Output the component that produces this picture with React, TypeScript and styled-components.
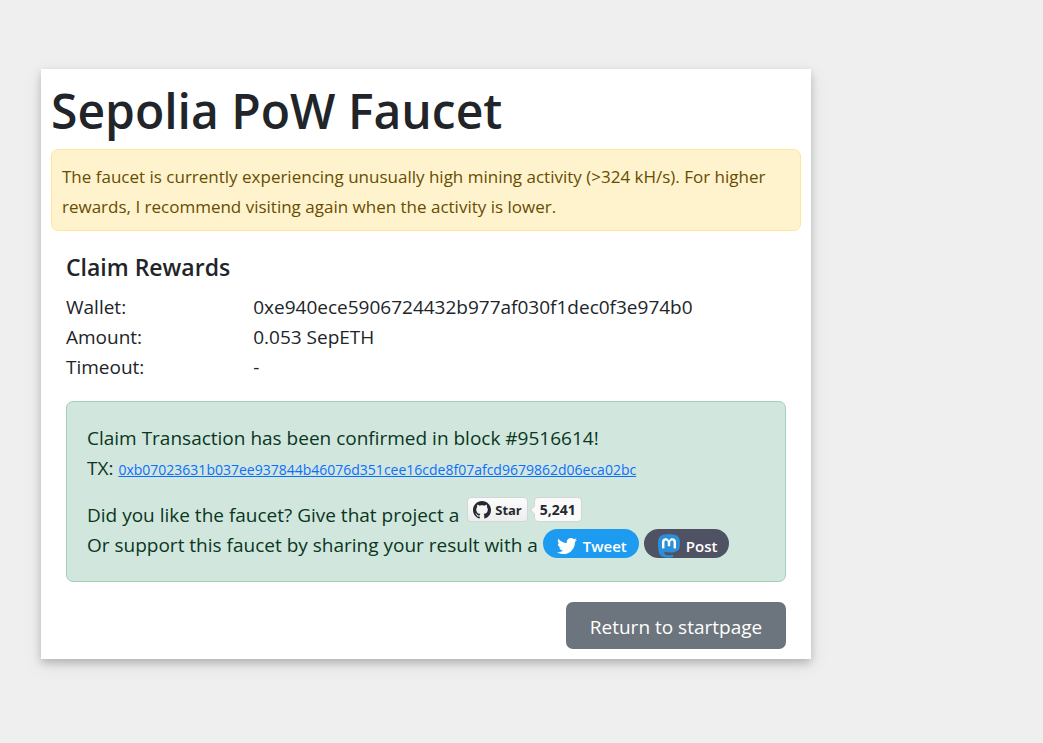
import React from "react";
import styled, { createGlobalStyle } from "styled-components";
import { FaTwitter } from "react-icons/fa";

const GlobalStyle = createGlobalStyle`
  *, *::before, *::after { box-sizing: border-box; }
  body {
    margin: 0;
    background: #efefef;
    color: #212529;
    font-family: "Segoe UI", "Open Sans", "Noto Sans", sans-serif;
    font-size: 19px;
    line-height: 30px;
  }
`;

const Page = styled.main`
  padding: 69px 41px;
`;

const Card = styled.section`
  max-width: 770px;
  padding: 12px 10px 10px;
  background: #fff;
  box-shadow: 0 4px 8px rgba(0, 0, 0, 0.2), 0 6px 20px rgba(0, 0, 0, 0.08);
`;

const Title = styled.h1`
  margin: 0 0 8px;
  font-size: 48px;
  font-weight: 600;
  line-height: 60px;
`;

const Alert = styled.div<{ $tone: "warning" | "success" }>`
  border: 1px solid ${(p) => (p.$tone === "warning" ? "#ffe69c" : "#a3cfbb")};
  border-radius: 7px;
  background: ${(p) => (p.$tone === "warning" ? "#fff3cd" : "#d1e7dd")};
  color: ${(p) => (p.$tone === "warning" ? "#664d03" : "#0a3622")};
  padding: ${(p) => (p.$tone === "warning" ? "12px 10px 8px" : "21px 20px")};
  font-size: ${(p) => (p.$tone === "warning" ? "17px" : "19px")};
`;

const Claim = styled.div`
  padding: 21px 15px 0;
`;

const Subtitle = styled.h2`
  margin: 0 0 10px;
  font-size: 23px;
  font-weight: 600;
  line-height: 30px;
`;

const Details = styled.dl`
  display: grid;
  grid-template-columns: 26% 1fr;
  margin: 0 0 19px;
`;

const Term = styled.dt``;

const Value = styled.dd`
  margin: 0;
`;

const Line = styled.div<{ $spaced?: boolean; $baseline?: boolean }>`
  display: flex;
  align-items: ${(p) => (p.$baseline ? "baseline" : "center")};
  height: 30px;
  white-space: pre;
  margin-top: ${(p) => (p.$spaced ? "17px" : "0")};
`;

const TxLink = styled.a`
  margin-left: 5px;
  color: #0d6efd;
  font-size: 14px;
`;

const StarGroup = styled.span`
  display: flex;
  align-self: flex-start;
  gap: 6px;
  margin: -3px 0 0 8px;
`;

const StarLink = styled.a<{ $count?: boolean }>`
  position: relative;
  display: flex;
  align-items: center;
  gap: 4px;
  height: 25px;
  padding: 0 5px;
  border: 1px solid #d0d7d4;
  border-radius: 4px;
  background: ${(p) => (p.$count ? "#fafafa" : "linear-gradient(#fcfcfc, #eeeeee)")};
  color: #24292f;
  font-size: ${(p) => (p.$count ? "14px" : "13px")};
  font-weight: 700;
  line-height: 20px;
  text-decoration: none;

  &::before {
    content: ${(p) => (p.$count ? '""' : "none")};
    position: absolute;
    top: 9px;
    left: -4px;
    width: 6px;
    height: 6px;
    border: 1px solid #d0d7d4;
    border-width: 0 0 1px 1px;
    background: #fafafa;
    transform: rotate(45deg);
  }
`;

const ShareGroup = styled.span`
  display: flex;
  gap: 5px;
  margin: -3px 0 0 5px;
`;

const ShareLink = styled.a<{ $color: string }>`
  display: flex;
  align-items: center;
  gap: 6px;
  height: 29px;
  padding: 4px 12px 0 14px;
  border-radius: 15px;
  background: ${(p) => p.$color};
  color: #fff;
  font-size: 15px;
  font-weight: 600;
  line-height: 20px;
  text-decoration: none;
`;

const Actions = styled.div`
  display: flex;
  justify-content: flex-end;
  margin-top: 20px;
`;

const ReturnButton = styled.button`
  min-width: 220px;
  height: 47px;
  padding: 3px 20px 0;
  border: 0;
  border-radius: 7px;
  background: #6c757d;
  color: #fff;
  font: inherit;
`;

const GithubIcon = () => (
  <svg width="18" height="18" viewBox="0 0 16 16" fill="currentColor" aria-hidden="true">
    <path d="M8 0C3.58 0 0 3.58 0 8c0 3.54 2.29 6.53 5.47 7.59.4.07.55-.17.55-.38 0-.19-.01-.82-.01-1.49-2.01.37-2.53-.49-2.69-.94-.09-.23-.48-.94-.82-1.13-.28-.15-.68-.52-.01-.53.63-.01 1.08.58 1.23.82.72 1.21 1.87.87 2.33.66.07-.52.28-.87.51-1.07-1.78-.2-3.64-.89-3.64-3.95 0-.87.31-1.59.82-2.15-.08-.2-.36-1.02.08-2.12 0 0 .67-.21 2.2.82.64-.18 1.32-.27 2-.27s1.36.09 2 .27c1.53-1.04 2.2-.82 2.2-.82.44 1.1.16 1.92.08 2.12.51.56.82 1.27.82 2.15 0 3.07-1.87 3.75-3.65 3.95.29.25.54.73.54 1.48 0 1.07-.01 1.93-.01 2.2 0 .21.15.46.55.38A8.01 8.01 0 0 0 16 8c0-4.42-3.58-8-8-8z" />
  </svg>
);

const MastodonIcon = () => (
  <svg width="22" height="24" viewBox="14 30 420 452" aria-hidden="true">
    <rect x="80" y="95" width="288" height="214" fill="#fff" />
    <path
      fill="#2b90d9"
      d="M433 179.11c0-97.2-63.71-125.7-63.71-125.7-62.52-28.7-228.56-28.4-290.48 0 0 0-63.72 28.5-63.72 125.7 0 115.7-6.6 259.4 105.63 289.1 40.51 10.7 75.32 13 103.33 11.4 50.81-2.8 79.32-18.1 79.32-18.1l-1.7-36.9s-36.31 11.4-77.12 10.1c-40.41-1.4-83-4.4-89.63-54a102.54 102.54 0 0 1-.9-13.9c85.63 20.9 158.65 9.1 178.75 6.7 56.12-6.7 105-41.3 111.23-72.9 9.8-49.8 9-121.5 9-121.5zm-75.12 125.2h-46.63v-114.2c0-49.7-64-51.6-64 6.9v62.5h-46.33V197c0-58.5-64-56.6-64-6.9v114.2H90.19c0-122.1-5.2-147.9 18.41-175 25.9-28.9 79.82-30.8 103.83 6.1l11.6 19.5 11.6-19.5c24.11-37.1 78.12-34.8 103.83-6.1 23.71 27.3 18.4 53 18.4 175z"
    />
  </svg>
);

const details = [
  ["Wallet:", "0xe940ece5906724432b977af030f1dec0f3e974b0"],
  ["Amount:", "0.053 SepETH"],
  ["Timeout:", "-"],
];

export default function App() {
  return (
    <Page>
      <GlobalStyle />
      <Card>
        <Title>Sepolia PoW Faucet</Title>
        <Alert $tone="warning">
          The faucet is currently experiencing unusually high mining activity (&gt;324 kH/s). For higher
          rewards, I recommend visiting again when the activity is lower.
        </Alert>
        <Claim>
          <Subtitle>Claim Rewards</Subtitle>
          <Details>
            {details.map(([term, value]) => (
              <React.Fragment key={term}>
                <Term>{term}</Term>
                <Value>{value}</Value>
              </React.Fragment>
            ))}
          </Details>
          <Alert $tone="success">
            <Line>Claim Transaction has been confirmed in block #9516614!</Line>
            <Line $baseline>
              TX:
              <TxLink href="#tx">0xb07023631b037ee937844b46076d351cee16cde8f07afcd9679862d06eca02bc</TxLink>
            </Line>
            <Line $spaced>
              Did you like the faucet? Give that project a
              <StarGroup>
                <StarLink href="#star">
                  <GithubIcon />
                  Star
                </StarLink>
                <StarLink href="#stargazers" $count>
                  5,241
                </StarLink>
              </StarGroup>
            </Line>
            <Line>
              Or support this faucet by sharing your result with a
              <ShareGroup>
                <ShareLink href="#tweet" $color="#1d9bf0">
                  <FaTwitter size={20} />
                  Tweet
                </ShareLink>
                <ShareLink href="#post" $color="#4f5262">
                  <MastodonIcon />
                  Post
                </ShareLink>
              </ShareGroup>
            </Line>
          </Alert>
          <Actions>
            <ReturnButton type="button">Return to startpage</ReturnButton>
          </Actions>
        </Claim>
      </Card>
    </Page>
  );
}
